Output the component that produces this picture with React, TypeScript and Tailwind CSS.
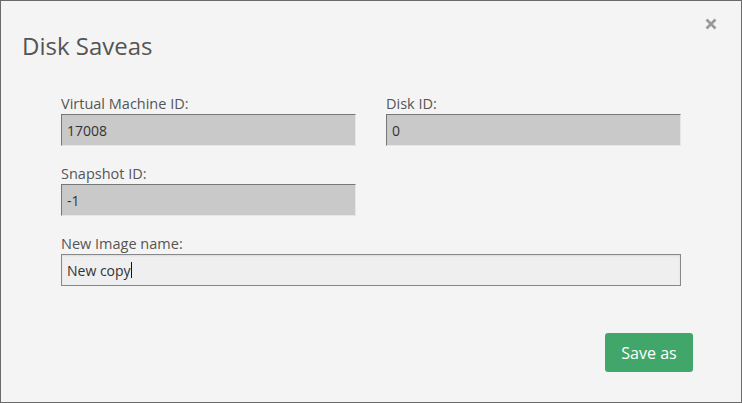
import React from "react";

function ReadOnlyField({ label, value }: { label: string; value: string }) {
  return (
    <div className="flex flex-col">
      <div className="h-[20px] text-[14.5px] leading-[19px] text-[#555]">{label}</div>
      <div className="h-[32px] flex items-center pl-[5px] bg-[#c9c9c9] border border-t-[#777] border-l-[#777] border-b-[#e6e6e6] border-r-[#e6e6e6] text-[14px] text-[#333]">
        {value}
      </div>
    </div>
  );
}

export default function App() {
  return (
    <div
      className="w-[742px] h-[403px] bg-[#f4f4f4] border border-[#6a6a6a] flex flex-col"
      style={{ fontFamily: '"Open Sans", "Noto Sans", sans-serif' }}
    >
      <div className="flex justify-between items-start pt-[17px] pl-[21px] pr-[24px]">
        <h1 className="mt-[15px] text-[24px] leading-[26px] text-[#555] font-normal">Disk Saveas</h1>
        <button className="w-[12px] h-[12px]" aria-label="Close">
          <svg width="12" height="12" viewBox="0 0 12 12">
            <path d="M1.5 1.5 L10.5 10.5 M10.5 1.5 L1.5 10.5" stroke="#999" strokeWidth="2.6" strokeLinecap="butt" />
          </svg>
        </button>
      </div>

      <div className="mt-[35px] ml-[60px] w-[620px] flex flex-col gap-[18px]">
        <div className="grid grid-cols-[295px_295px] gap-x-[30px]">
          <ReadOnlyField label="Virtual Machine ID:" value="17008" />
          <ReadOnlyField label="Disk ID:" value="0" />
        </div>
        <div className="grid grid-cols-[295px_295px] gap-x-[30px]">
          <ReadOnlyField label="Snapshot ID:" value="-1" />
          <div />
        </div>
        <div className="flex flex-col">
          <div className="h-[20px] text-[14.5px] leading-[19px] text-[#555]">New Image name:</div>
          <div className="h-[32px] flex items-center pl-[5px] bg-[#efefef] border border-[#888] shadow-[inset_0_1px_2px_rgba(0,0,0,0.08)] text-[14px] text-[#333]">
            <span>New copy</span>
            <span className="inline-block w-[1px] h-[16px] bg-[#111]"></span>
          </div>
        </div>
      </div>

      <div className="flex justify-end mt-[47px] pr-[48px]">
        <button className="w-[88px] h-[39px] rounded-[3px] bg-[#41a66a] text-white text-[16px] leading-[20px]">
          Save as
        </button>
      </div>
    </div>
  );
}
